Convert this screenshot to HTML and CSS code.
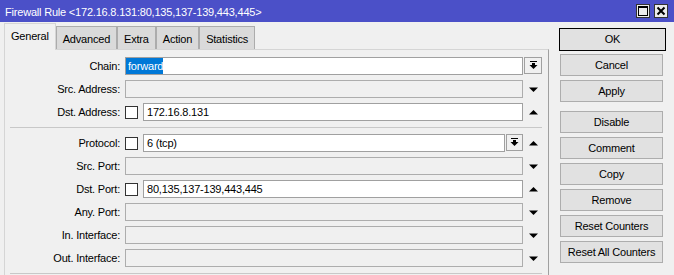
FILE: index.html
```html
<!DOCTYPE html>
<html lang="en">
<head>
    <meta charset="UTF-8">
    <title>Firewall Rule</title>
    <link rel="stylesheet" href="styles.css">
</head>
<body>
    <div class="titlebar">
        <div class="title">Firewall Rule &lt;172.16.8.131:80,135,137-139,443,445&gt;</div>
        <div class="title-buttons">
            <div class="tb-btn">
                <svg width="12" height="12" viewBox="0 0 12 12"><rect x="1.5" y="1.5" width="9" height="9" fill="none" stroke="#000"/><rect x="1" y="1" width="10" height="2" fill="#000"/></svg>
            </div>
            <div class="tb-btn">
                <svg width="12" height="12" viewBox="0 0 12 12"><path d="M2.5 2.5 L9.5 9.5 M9.5 2.5 L2.5 9.5" stroke="#000" stroke-width="2"/></svg>
            </div>
        </div>
    </div>

    <div class="main">
        <div class="left">
            <div class="tabs">
                <div class="tab active">General</div>
                <div class="tab">Advanced</div>
                <div class="tab">Extra</div>
                <div class="tab">Action</div>
                <div class="tab">Statistics</div>
            </div>

            <div class="panel">
                <div class="row">
                    <div class="label">Chain:</div>
                    <div class="field-wrap">
                        <div class="field chain"><span class="selected">forward</span></div>
                    </div>
                    <div class="arrow">
                        <div class="drop"><svg width="9" height="9" viewBox="0 0 9 9"><rect x="1" y="0" width="7" height="1"/><rect x="3" y="2" width="3" height="2"/><polygon points="0.5,4 8.5,4 4.5,8"/></svg></div>
                    </div>
                </div>
                <div class="row">
                    <div class="label">Src. Address:</div>
                    <div class="field-wrap"><div class="field disabled"></div></div>
                    <div class="arrow"><svg width="9" height="5" viewBox="0 0 9 5"><polygon points="0,0.5 9,0.5 4.5,5"/></svg></div>
                </div>
                <div class="row">
                    <div class="label">Dst. Address:</div>
                    <div class="field-wrap">
                        <div class="check"></div>
                        <div class="field">172.16.8.131</div>
                    </div>
                    <div class="arrow"><svg width="9" height="5" viewBox="0 0 9 5"><polygon points="0,4.5 9,4.5 4.5,0"/></svg></div>
                </div>

                <div class="sep"></div>

                <div class="row">
                    <div class="label">Protocol:</div>
                    <div class="field-wrap">
                        <div class="check"></div>
                        <div class="field">6 (tcp)</div>
                        <div class="drop inline"><svg width="9" height="9" viewBox="0 0 9 9"><rect x="1" y="0" width="7" height="1"/><rect x="3" y="2" width="3" height="2"/><polygon points="0.5,4 8.5,4 4.5,8"/></svg></div>
                    </div>
                    <div class="arrow"><svg width="9" height="5" viewBox="0 0 9 5"><polygon points="0,4.5 9,4.5 4.5,0"/></svg></div>
                </div>
                <div class="row">
                    <div class="label">Src. Port:</div>
                    <div class="field-wrap"><div class="field disabled"></div></div>
                    <div class="arrow"><svg width="9" height="5" viewBox="0 0 9 5"><polygon points="0,0.5 9,0.5 4.5,5"/></svg></div>
                </div>
                <div class="row">
                    <div class="label">Dst. Port:</div>
                    <div class="field-wrap">
                        <div class="check"></div>
                        <div class="field">80,135,137-139,443,445</div>
                    </div>
                    <div class="arrow"><svg width="9" height="5" viewBox="0 0 9 5"><polygon points="0,4.5 9,4.5 4.5,0"/></svg></div>
                </div>
                <div class="row">
                    <div class="label">Any. Port:</div>
                    <div class="field-wrap"><div class="field disabled"></div></div>
                    <div class="arrow"><svg width="9" height="5" viewBox="0 0 9 5"><polygon points="0,0.5 9,0.5 4.5,5"/></svg></div>
                </div>
                <div class="row">
                    <div class="label">In. Interface:</div>
                    <div class="field-wrap"><div class="field disabled"></div></div>
                    <div class="arrow"><svg width="9" height="5" viewBox="0 0 9 5"><polygon points="0,0.5 9,0.5 4.5,5"/></svg></div>
                </div>
                <div class="row">
                    <div class="label">Out. Interface:</div>
                    <div class="field-wrap"><div class="field disabled"></div></div>
                    <div class="arrow"><svg width="9" height="5" viewBox="0 0 9 5"><polygon points="0,0.5 9,0.5 4.5,5"/></svg></div>
                </div>

                <div class="sep"></div>
            </div>
        </div>

        <div class="actions">
            <div class="btn default">OK</div>
            <div class="btn">Cancel</div>
            <div class="btn">Apply</div>
            <div class="btn group-start">Disable</div>
            <div class="btn">Comment</div>
            <div class="btn">Copy</div>
            <div class="btn">Remove</div>
            <div class="btn">Reset Counters</div>
            <div class="btn">Reset All Counters</div>
        </div>
    </div>
</body>
</html>
```

FILE: styles.css
```css
body {
    margin: 0;
    background-color: #f0f0f0;
    font-family: "Liberation Sans", Arial, sans-serif;
    font-size: 11px;
    letter-spacing: -0.2px;
    color: #000;
    overflow: hidden;
    height: 275px;
}
.titlebar {
    height: 22px;
    background-color: #4b50c8;
    color: #fff;
    display: flex;
    padding-left: 5px;
}
.title {
    flex: 1;
    padding-top: 3px;
    line-height: 19px;
    white-space: nowrap;
}
.title-buttons {
    display: flex;
    gap: 4px;
    margin: 4px 6px 0 0;
}
.tb-btn {
    width: 14px;
    height: 14px;
    box-sizing: border-box;
    border: 1px solid #333;
    background-color: #ececec;
    display: flex;
    align-items: center;
    justify-content: center;
}
.main {
    display: flex;
}
.left {
    width: 549px;
    padding-left: 4px;
    box-sizing: border-box;
}
.tabs {
    display: flex;
    align-items: flex-end;
    height: 27px;
}
.tab {
    height: 23px;
    box-sizing: border-box;
    padding: 2px 6px 0;
    line-height: 20px;
    border: 1px solid #acacac;
    border-bottom: none;
    background-color: #dadada;
    white-space: nowrap;
}
.tab.active {
    height: 27px;
    margin-bottom: -1px;
    background-color: #f0f0f0;
    border-color: #d5d5d5;
    position: relative;
    z-index: 1;
}
.panel {
    display: flex;
    flex-direction: column;
    height: 226px;
    box-sizing: border-box;
    overflow: hidden;
    padding: 7px 6px 0 0;
    border: 1px solid #d5d5d5;
    border-right-color: #a0a0a0;
    border-bottom: none;
}
.row {
    display: flex;
    align-items: center;
    flex: none;
    height: 18px;
    margin-bottom: 5px;
}
.label {
    width: 115px;
    margin-right: 5px;
    text-align: right;
    line-height: 18px;
    white-space: nowrap;
}
.field-wrap {
    flex: 1;
    display: flex;
    align-items: center;
    height: 18px;
}
.check {
    flex: none;
    width: 13px;
    height: 13px;
    box-sizing: border-box;
    border: 1px solid #333;
    background-color: #fff;
    margin-right: 5px;
}
.field {
    flex: 1;
    height: 18px;
    box-sizing: border-box;
    border: 1px solid #a0a0a0;
    background-color: #fff;
    padding-left: 3px;
    line-height: 16px;
    white-space: nowrap;
    overflow: hidden;
}
.field.disabled {
    background-color: #f0f0f0;
    border-color: #adadad;
}
.field.chain {
    padding-left: 0;
}
.selected {
    display: inline-block;
    height: 16px;
    padding-left: 2px;
    background-color: #0078d7;
    color: #fff;
}
.arrow {
    flex: none;
    width: 18px;
    height: 18px;
    margin-left: 1px;
    display: flex;
    align-items: center;
    justify-content: center;
}
.drop {
    width: 18px;
    height: 17px;
    box-sizing: border-box;
    border: 1px solid #a0a0a0;
    background-color: #f0f0f0;
    display: flex;
    align-items: center;
    justify-content: center;
    align-self: flex-start;
}
.drop.inline {
    flex: none;
    width: 17px;
    margin-left: 1px;
}
.sep {
    flex: none;
    border-top: 1px solid #c8c8c8;
    margin: 1px 0 6px 5px;
}
.actions {
    display: flex;
    flex-direction: column;
    gap: 4px;
    padding: 6px 0 0 11px;
}
.btn {
    width: 103px;
    height: 22px;
    box-sizing: border-box;
    border: 1px solid #adadad;
    background-color: #e1e1e1;
    text-align: center;
    line-height: 21px;
    white-space: nowrap;
}
.btn.default {
    width: 107px;
    height: 23px;
    margin: 0 0 -1px -1px;
    border-color: #000;
}
.btn.group-start {
    margin-top: 5px;
}
```
